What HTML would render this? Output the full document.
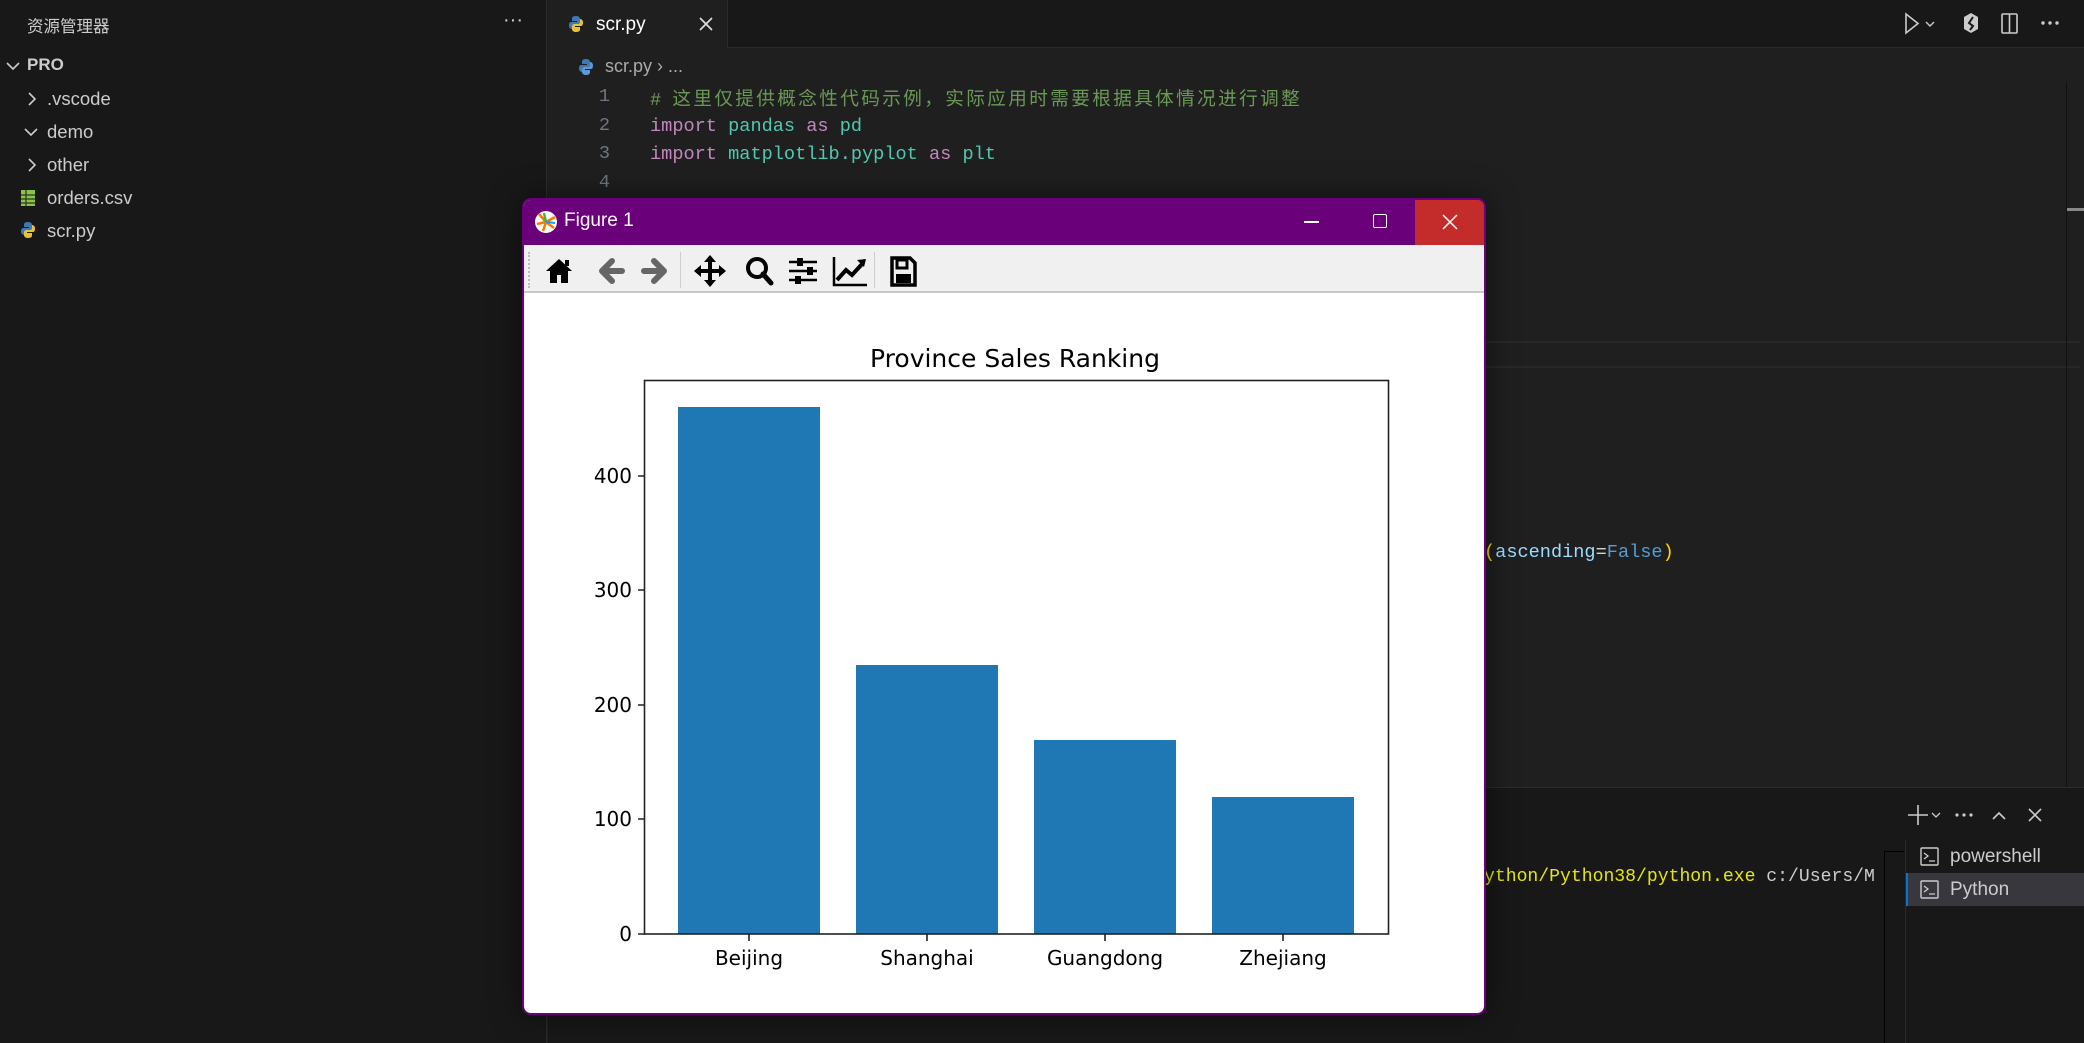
<!DOCTYPE html>
<html><head><meta charset="utf-8"><style>
*{margin:0;padding:0;box-sizing:border-box}
body{width:2084px;height:1043px;background:#1f1f1f;position:relative;overflow:hidden;font-family:"Liberation Sans","Noto Sans CJK SC",sans-serif;color:#ccc}
.a{position:absolute;white-space:nowrap}
.mono{font-family:"Liberation Mono","Noto Sans CJK SC",monospace;font-size:18.6px}
.side{left:0;top:0;width:547px;height:1043px;background:#181818;border-right:1px solid #2b2b2b}
.si{font-size:18.5px;color:#ccc;line-height:24px}
.ln{color:#6e7681;width:40px;text-align:right;left:570px}
.kw{color:#c586c0}.md{color:#4ec9b0}.cm{color:#6a9955}
</style></head><body>
<div class="a side"></div>
<div class="a" style="left:27px;top:13px;font-size:16.5px;color:#ccc">资源管理器</div>
<div class="a" style="left:503px;top:9px;font-size:20px;color:#ccc">···</div>
<svg class="a" style="left:5px;top:60px" width="16" height="12"><path d="M2 3l6 6 6-6" stroke="#ccc" stroke-width="1.6" fill="none"/></svg>
<div class="a" style="left:27px;top:55px;font-size:17px;font-weight:bold;color:#ccc">PRO</div>
<svg class="a" style="left:26px;top:91px" width="12" height="16"><path d="M3 2l6 6-6 6" stroke="#ccc" stroke-width="1.6" fill="none"/></svg>
<div class="a si" style="left:47px;top:87px">.vscode</div>
<svg class="a" style="left:23px;top:126px" width="16" height="12"><path d="M2 3l6 6 6-6" stroke="#ccc" stroke-width="1.6" fill="none"/></svg>
<div class="a si" style="left:47px;top:120px">demo</div>
<svg class="a" style="left:26px;top:157px" width="12" height="16"><path d="M3 2l6 6-6 6" stroke="#ccc" stroke-width="1.6" fill="none"/></svg>
<div class="a si" style="left:47px;top:153px">other</div>
<svg class="a" style="left:20px;top:189px" width="16" height="18"><rect x="1" y="1" width="14" height="16" fill="#8bc34a"/><path d="M1 6h14M1 10h14M1 14h14M6 1v16" stroke="#2a3a1a" stroke-width="1.2"/></svg>
<div class="a si" style="left:47px;top:186px">orders.csv</div>
<svg class="a" style="left:20px;top:221px" width="16" height="18"><path d="M8 1c-4 0-4 2-4 3v2h5v1H3c-2 0-2 3-2 4s1 3 3 3V11c0-1 1-2 2-2h4c1 0 2-1 2-2V4c0-2-2-3-4-3z" fill="#3c7ab6"/><path d="M8 17c4 0 4-2 4-3v-2H7v-1h6c2 0 2-3 2-4s-1-3-3-3v3c0 1-1 2-2 2H6c-1 0-2 1-2 2v3c0 2 2 3 4 3z" fill="#ffd43b" opacity=".9"/></svg>
<div class="a si" style="left:47px;top:219px">scr.py</div>

<div class="a" style="left:548px;top:0;width:1536px;height:48px;background:#181818;border-bottom:1px solid #2b2b2b"></div>
<div class="a" style="left:548px;top:0;width:180px;height:49px;background:#1f1f1f;border-right:1px solid #2b2b2b"></div>
<svg class="a" style="left:568px;top:15px" width="16" height="18"><path d="M8 1c-4 0-4 2-4 3v2h5v1H3c-2 0-2 3-2 4s1 3 3 3V11c0-1 1-2 2-2h4c1 0 2-1 2-2V4c0-2-2-3-4-3z" fill="#3c7ab6"/><path d="M8 17c4 0 4-2 4-3v-2H7v-1h6c2 0 2-3 2-4s-1-3-3-3v3c0 1-1 2-2 2H6c-1 0-2 1-2 2v3c0 2 2 3 4 3z" fill="#ffd43b" opacity=".9"/></svg>
<div class="a" style="left:596px;top:14px;font-size:19px;color:#fff">scr.py</div>
<svg class="a" style="left:698px;top:16px" width="16" height="16"><path d="M2 2l12 12M14 2L2 14" stroke="#ddd" stroke-width="1.7"/></svg>
<svg class="a" style="left:1900px;top:12px" width="180" height="24"><path d="M6 2v19l12-9.5z" stroke="#ccc" stroke-width="1.6" fill="none"/><path d="M26 10l4 4 4-4" stroke="#ccc" stroke-width="1.4" fill="none"/><path d="M71 1l7 4v12l-7 4-7-4V5z" fill="#ccc"/><path d="M73 5l-4 6 4 3-3 4" stroke="#181818" stroke-width="2" fill="none"/><rect x="102" y="2" width="15" height="19" rx="1" stroke="#ccc" stroke-width="1.6" fill="none"/><path d="M109.5 2v19" stroke="#ccc" stroke-width="1.6"/><circle cx="143" cy="11" r="1.7" fill="#ccc"/><circle cx="150" cy="11" r="1.7" fill="#ccc"/><circle cx="157" cy="11" r="1.7" fill="#ccc"/></svg>

<svg class="a" style="left:578px;top:58px" width="16" height="18"><path d="M8 1c-4 0-4 2-4 3v2h5v1H3c-2 0-2 3-2 4s1 3 3 3V11c0-1 1-2 2-2h4c1 0 2-1 2-2V4c0-2-2-3-4-3z" fill="#3c7ab6"/><path d="M8 17c4 0 4-2 4-3v-2H7v-1h6c2 0 2-3 2-4s-1-3-3-3v3c0 1-1 2-2 2H6c-1 0-2 1-2 2v3c0 2 2 3 4 3z" fill="#5a9bd5"/></svg>
<div class="a" style="left:605px;top:56px;font-size:18px;color:#aaa">scr.py &#x203A; ...</div>

<div class="a mono ln" style="top:86px">1</div>
<div class="a mono ln" style="top:115px">2</div>
<div class="a mono ln" style="top:143px">3</div>
<div class="a mono ln" style="top:172px">4</div>
<div class="a mono cm" style="left:650px;top:84px"># <span style="letter-spacing:2.4px">这里仅提供概念性代码示例，实际应用时需要根据具体情况进行调整</span></div>
<div class="a mono" style="left:650px;top:116px"><span class="kw">import</span> <span class="md">pandas</span> <span class="kw">as</span> <span class="md">pd</span></div>
<div class="a mono" style="left:650px;top:144px"><span class="kw">import</span> <span class="md">matplotlib.pyplot</span> <span class="kw">as</span> <span class="md">plt</span></div>
<div class="a" style="left:1480px;top:341px;width:600px;height:27px;border-top:2px solid #282828;border-bottom:2px solid #282828"></div>
<div class="a mono" style="left:1484px;top:542px"><span style="color:#ffd700">(</span><span style="color:#9cdcfe">ascending</span><span style="color:#d4d4d4">=</span><span style="color:#569cd6">False</span><span style="color:#ffd700">)</span></div>
<div class="a" style="left:2066px;top:82px;width:1px;height:705px;background:#111"></div>
<div class="a" style="left:2067px;top:208px;width:17px;height:3px;background:#888"></div>

<div class="a" style="left:548px;top:787px;width:1536px;height:256px;background:#181818;border-top:1px solid #2b2b2b"></div>
<svg class="a" style="left:1905px;top:800px" width="179" height="30"><path d="M3 15h20M13 5v20" stroke="#ccc" stroke-width="1.6"/><path d="M27 13l4 4 4-4" stroke="#ccc" stroke-width="1.3" fill="none"/><circle cx="52" cy="15" r="1.6" fill="#ccc"/><circle cx="59" cy="15" r="1.6" fill="#ccc"/><circle cx="66" cy="15" r="1.6" fill="#ccc"/><path d="M88 19l6-6 6 6" stroke="#ccc" stroke-width="1.6" fill="none"/><path d="M124 9l12 12M136 9l-12 12" stroke="#ccc" stroke-width="1.6"/></svg>
<div class="a mono" style="left:1484px;top:867px;width:395px;overflow:hidden;font-size:18.1px"><span style="color:#e5e510">ython/Python38/python.exe</span><span style="color:#ccc"> c:/Users/M</span></div>
<div class="a" style="left:1884px;top:851px;width:1px;height:192px;background:#000"></div>
<div class="a" style="left:1884px;top:851px;width:20px;height:1px;background:#000"></div>
<div class="a" style="left:1905px;top:840px;width:1px;height:203px;background:#2b2b2b"></div>
<div class="a" style="left:1906px;top:873px;width:178px;height:33px;background:#37373d;border-left:2px solid #0078d4"></div>
<svg class="a" style="left:1920px;top:847px" width="20" height="20"><rect x="1" y="1" width="17" height="17" rx="1" stroke="#ccc" stroke-width="1.4" fill="none"/><path d="M4 6l4 3-4 3M9 14h6" stroke="#ccc" stroke-width="1.3" fill="none"/></svg>
<div class="a" style="left:1950px;top:846px;font-size:19px;color:#ccc">powershell</div>
<svg class="a" style="left:1920px;top:880px" width="20" height="20"><rect x="1" y="1" width="17" height="17" rx="1" stroke="#ccc" stroke-width="1.4" fill="none"/><path d="M4 6l4 3-4 3M9 14h6" stroke="#ccc" stroke-width="1.3" fill="none"/></svg>
<div class="a" style="left:1950px;top:879px;font-size:19px;color:#ccc">Python</div>

<div class="a" style="left:522px;top:198px;width:964px;height:817px;background:#fff;border:2px solid #6b007b;border-radius:9px;overflow:hidden;box-shadow:0 0 30px rgba(0,0,0,.5)">
 <div style="position:absolute;left:0;top:0;width:960px;height:45px;background:#6b007b"></div>
 <div style="position:absolute;left:891px;top:0;width:69px;height:45px;background:#c42b2b"></div>
 <svg style="position:absolute;left:10px;top:10px" width="24" height="24"><circle cx="12" cy="12" r="11" fill="#fff"/><path d="M12 12L5 4M12 12l9-5M12 12l-3 9M12 12l8 6M12 12L3 14" stroke-width="2.5" stroke="#f57c00"/><path d="M12 12l-2-9" stroke="#4caf50" stroke-width="2.5"/><path d="M12 12l9 1" stroke="#2196f3" stroke-width="2"/></svg>
 <div style="position:absolute;left:40px;top:10px;font-size:19px;color:#fff">Figure 1</div>
 <div style="position:absolute;left:780px;top:21px;width:15px;height:1.5px;background:#fff"></div>
 <div style="position:absolute;left:849px;top:14px;width:14px;height:14px;border:1.5px solid #fff;border-radius:2px"></div>
 <svg style="position:absolute;left:918px;top:14px" width="16" height="16"><path d="M1 1l14 14M15 1L1 15" stroke="#fff" stroke-width="1.5"/></svg>
 <div style="position:absolute;left:0;top:45px;width:960px;height:48px;background:#f0f0f0;border-bottom:2px solid #c8c8c8"></div>
 <div style="position:absolute;left:4px;top:52px;width:2px;height:36px;border-left:2px dotted #bbb"></div>
 <div style="position:absolute;left:156px;top:52px;width:1px;height:36px;background:#ccc"></div>
 <div style="position:absolute;left:350px;top:52px;width:1px;height:36px;background:#ccc"></div>
 <svg style="position:absolute;left:18px;top:54px" width="380" height="34">
  <path d="M4 17L17 5l13 12h-4v12h-7v-8h-4v8H8V17z" fill="#000"/><rect x="23" y="6" width="4" height="6" fill="#000"/>
  <path d="M60 17l10-10M60 17l10 10M61 17h19" stroke="#666" stroke-width="6" stroke-linecap="round" fill="none"/>
  <path d="M122 17l-10-10M122 17l-10 10M121 17h-19" stroke="#666" stroke-width="6" stroke-linecap="round" fill="none"/>
  <path d="M168 3v28M154 17h28" stroke="#000" stroke-width="4"/><path d="M168 1l-6 7h12zM168 33l-6-7h12zM152 17l7-6v12zM184 17l-7-6v12z" fill="#000"/>
  <g transform="translate(15,0)"><circle cx="200" cy="14" r="9" stroke="#000" stroke-width="4" fill="none"/><path d="M206 20l8 9" stroke="#000" stroke-width="5" stroke-linecap="round"/></g>
  <g transform="translate(22,0)"><path d="M225 8h28M225 17h28M225 26h28" stroke="#000" stroke-width="2.5"/><rect x="233" y="4" width="6" height="8" fill="#000"/><rect x="243" y="13" width="6" height="8" fill="#000"/><rect x="231" y="22" width="6" height="8" fill="#000"/></g>
  <g transform="translate(30,0)"><path d="M262 3v28h33" stroke="#000" stroke-width="2.5" fill="none"/><path d="M265 26l9-10 6 5 11-12" stroke="#000" stroke-width="4" fill="none"/><path d="M294 5l-9 1 7 7z" fill="#000"/></g>
  <g transform="translate(34,0)"><path d="M316 4h18l5 5v22h-23z" stroke="#000" stroke-width="3.5" fill="none"/><rect x="321" y="6" width="10" height="8" stroke="#000" stroke-width="3" fill="none"/><rect x="320" y="20" width="15" height="9" fill="#000"/></g>
 </svg>
</div>
<svg class="a" style="left:0;top:0" width="2084" height="1043">
 <g font-family="DejaVu Sans, sans-serif" fill="#000">
 <text x="1015" y="367" font-size="25" text-anchor="middle">Province Sales Ranking</text>
 <rect x="678" y="407" width="142" height="527" fill="#1f77b4"/>
 <rect x="856" y="665" width="142" height="269" fill="#1f77b4"/>
 <rect x="1034" y="740" width="142" height="194" fill="#1f77b4"/>
 <rect x="1212" y="797" width="142" height="137" fill="#1f77b4"/>
 <rect x="644.5" y="380.5" width="744" height="553.5" fill="none" stroke="#222" stroke-width="1.6"/>
 <g stroke="#222" stroke-width="1.6">
 <path d="M638 934h7M638 819h7M638 705h7M638 590h7M638 476h7"/>
 <path d="M749 934v7M927 934v7M1105 934v7M1283 934v7"/>
 </g>
 <g font-size="20" text-anchor="end">
 <text x="632" y="941">0</text><text x="632" y="826">100</text><text x="632" y="712">200</text><text x="632" y="597">300</text><text x="632" y="483">400</text>
 </g>
 <g font-size="20" text-anchor="middle">
 <text x="749" y="965">Beijing</text><text x="927" y="965">Shanghai</text><text x="1105" y="965">Guangdong</text><text x="1283" y="965">Zhejiang</text>
 </g>
 </g>
</svg>
</body></html>
